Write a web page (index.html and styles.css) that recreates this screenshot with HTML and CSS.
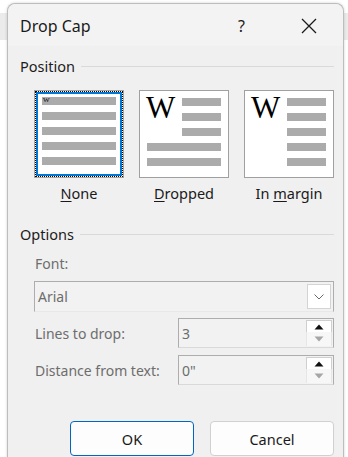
FILE: index.html
```html
<!DOCTYPE html>
<html>
<head>
<meta charset="utf-8">
<link rel="stylesheet" href="styles.css">
</head>
<body>
<div class="desk">
  <div class="ribbon-strip"></div>
  <div class="dialog">
    <div class="titlebar">
      <span class="title">Drop Cap</span>
      <span class="help">?</span>
      <span class="close"><svg width="16" height="16" viewBox="0 0 16 16"><path d="M1 1L15 15M15 1L1 15" stroke="#1a1a1a" stroke-width="1.3" fill="none"/></svg></span>
    </div>
    <div class="body">
      <div class="group-head"><span>Position</span><i class="rule"></i></div>
      <div class="positions">
        <div class="pos">
          <div class="preview selected">
            <div class="focus">
              <div class="inner grid-none">
                <div class="bar"><span class="tiny-w">W</span></div>
                <div class="bar"></div>
                <div class="bar"></div>
                <div class="bar"></div>
                <div class="bar"></div>
              </div>
            </div>
          </div>
          <div class="plabel"><u>N</u>one</div>
        </div>
        <div class="pos">
          <div class="preview">
            <div class="inner grid-cap">
              <div class="bigw">W</div>
              <div class="bar"></div>
              <div class="bar"></div>
              <div class="bar"></div>
              <div class="bar full"></div>
              <div class="bar full"></div>
            </div>
          </div>
          <div class="plabel"><u>D</u>ropped</div>
        </div>
        <div class="pos">
          <div class="preview">
            <div class="inner grid-cap">
              <div class="bigw">W</div>
              <div class="bar"></div>
              <div class="bar"></div>
              <div class="bar"></div>
              <div class="bar col2"></div>
              <div class="bar col2"></div>
            </div>
          </div>
          <div class="plabel">In <u>m</u>argin</div>
        </div>
      </div>

      <div class="group-head options-head"><span>Options</span><i class="rule"></i></div>
      <div class="options">
        <div class="flabel">Font:</div>
        <div class="select">
          <span class="val">Arial</span>
          <span class="dd"><svg width="12" height="8" viewBox="0 0 12 8"><path d="M1.5 1.5L6 6L10.5 1.5" stroke="#6a6a6a" stroke-width="1" fill="none"/></svg></span>
        </div>
        <div class="row">
          <span class="rlabel">Lines to drop:</span>
          <div class="spin">
            <span class="val">3</span>
            <div class="spinbtns">
              <span class="up"><svg width="10" height="6" viewBox="0 0 10 6"><path d="M0.5 5.5L5 0.5L9.5 5.5Z" fill="#111"/></svg></span>
              <span class="down"><svg width="10" height="6" viewBox="0 0 10 6"><path d="M0.5 0.5L5 5.5L9.5 0.5Z" fill="#a6a6a6"/></svg></span>
            </div>
          </div>
        </div>
        <div class="row">
          <span class="rlabel">Distance from text:</span>
          <div class="spin">
            <span class="val">0"</span>
            <div class="spinbtns">
              <span class="up"><svg width="10" height="6" viewBox="0 0 10 6"><path d="M0.5 5.5L5 0.5L9.5 5.5Z" fill="#111"/></svg></span>
              <span class="down"><svg width="10" height="6" viewBox="0 0 10 6"><path d="M0.5 0.5L5 5.5L9.5 0.5Z" fill="#a6a6a6"/></svg></span>
            </div>
          </div>
        </div>
      </div>

      <div class="buttons">
        <button class="btn primary">OK</button>
        <button class="btn">Cancel</button>
      </div>
    </div>
  </div>
</div>
</body>
</html>
```

FILE: styles.css
```css
* { box-sizing: border-box; }
html, body {
  margin: 0;
  padding: 0;
  height: 100%;
  overflow: hidden;
}
body {
  background: #ffffff;
  font-family: "Noto Sans", "Open Sans", sans-serif;
  color: #1a1a1a;
}
.desk {
  position: relative;
  height: 457px;
  padding: 3px 4px 0 7px;
  background: linear-gradient(to bottom, #ffffff 0, #ffffff 13px, #ebebeb 13px, #ebebeb 40px, #ffffff 40px);
}
.ribbon-strip {
  position: absolute;
  left: 0;
  right: 0;
  top: 0;
  height: 3px;
  background: #ffffff;
}
.dialog {
  position: relative;
  background: #f0f0f0;
  border: 1px solid #bdbdbd;
  border-bottom: none;
  border-radius: 8px 8px 0 0;
  height: 460px;
  box-shadow: 0 0 3px rgba(0,0,0,0.18);
}
.titlebar {
  height: 42px;
  display: flex;
  align-items: center;
  padding-left: 12px;
  background: #f3f3f3;
  border-radius: 8px 8px 0 0;
}
.title {
  font-size: 16px;
  flex: 1;
  padding-top: 1px;
}
.help {
  font-size: 16px;
  width: 16px;
  margin-right: 47px;
  padding-top: 1px;
}
.close {
  display: flex;
  width: 42px;
  padding-top: 2px;
}
.body {
  padding: 10px 9px 0 12px;
}
.group-head {
  display: flex;
  align-items: center;
  gap: 6px;
  font-size: 14.5px;
  height: 20px;
  color: #1c1c1c;
}
.rule {
  flex: 1;
  border-top: 1px solid #dadada;
  margin-top: 1px;
}
.positions {
  display: flex;
  gap: 15px;
  padding-left: 14px;
  margin-top: 14px;
}
.pos {
  width: 90px;
  display: flex;
  flex-direction: column;
  align-items: center;
}
.preview {
  width: 90px;
  height: 88px;
  border: 1px solid #a0a0a0;
  background: #ffffff;
  padding: 7px 7px 0 7px;
}
.preview.selected {
  padding: 0;
  border-color: #a5a5a5;
}
.focus {
  height: 100%;
  border: 1px dotted #000;
  padding: 0;
}
.focus .inner {
  height: 100%;
  border: 2px solid #0078d4;
  padding: 3px 4px 0 4px;
}
.inner {
  display: grid;
  row-gap: 7px;
  grid-template-rows: repeat(5, 8px);
  align-content: start;
}
.grid-cap {
  grid-template-columns: 28px 39px;
  column-gap: 7px;
}
.bar {
  background: #ababab;
  height: 8px;
  position: relative;
}
.grid-cap .bar { grid-column: 2; }
.grid-cap .bar.full { grid-column: 1 / 3; }
.tiny-w {
  position: absolute;
  left: 1px;
  top: 0;
  font-family: "Liberation Serif", serif;
  font-size: 7px;
  line-height: 7px;
  color: #000;
}
.bigw {
  grid-column: 1;
  grid-row: 1 / 4;
  font-family: "Liberation Serif", serif;
  font-size: 31px;
  line-height: 20px;
  color: #000;
  margin-left: -1px;
}
.plabel {
  font-size: 14.5px;
  margin-top: 5px;
  color: #1a1a1a;
}
.plabel u {
  text-underline-offset: 2px;
}
.options-head {
  margin-top: 21px;
}
.options {
  padding-left: 14px;
  margin-top: 10px;
  color: #6d6d6d;
  font-size: 14px;
}
.flabel {
  height: 20px;
  line-height: 20px;
  padding-left: 1px;
}
.select {
  margin-top: 7px;
  height: 31px;
  border: 1px solid #adadad;
  border-bottom-color: #e8e8e8;
  background: #f2f2f2;
  display: flex;
  align-items: center;
  justify-content: space-between;
  padding: 0 2px 0 3px;
}
.dd {
  width: 24px;
  height: 25px;
  background: #ffffff;
  border: 1px solid #d4d4d4;
  display: flex;
  align-items: center;
  justify-content: center;
  padding-top: 1px;
}
.row {
  display: flex;
  align-items: center;
  margin-top: 6px;
}
.row + .row { margin-top: 7px; }
.rlabel {
  width: 144px;
  padding-left: 1px;
}
.spin {
  flex: 1;
  height: 30px;
  border: 1px solid #adadad;
  border-bottom-color: #d9d9d9;
  background: #f2f2f2;
  display: flex;
  align-items: center;
  justify-content: space-between;
  padding: 0 1px 0 3px;
}
.spinbtns {
  display: flex;
  flex-direction: column;
  width: 26px;
}
.spinbtns span {
  display: flex;
  align-items: center;
  justify-content: center;
}
.up {
  height: 12px;
  background: #ffffff;
  border: 1px solid #cfcfcf;
  border-bottom: none;
}
.down {
  height: 14px;
  background: #f7f7f7;
  border-left: 1px solid #e6e6e6;
  border-right: 1px solid #e6e6e6;
}
.buttons {
  display: flex;
  justify-content: flex-end;
  gap: 16px;
  margin-top: 36px;
}
.btn {
  width: 124px;
  height: 35px;
  font-family: "Noto Sans", "Open Sans", sans-serif;
  font-size: 14.5px;
  color: #1a1a1a;
  background: #fdfdfd;
  border: 1px solid #d0d0d0;
  border-radius: 4px;
  padding: 0;
}
.btn.primary {
  border-color: #0067c0;
}
```
